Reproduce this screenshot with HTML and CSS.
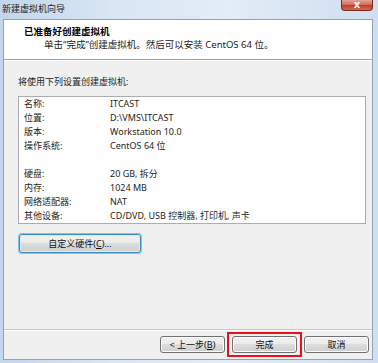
FILE: index.html
```html
<!DOCTYPE html>
<html lang="zh-CN">
<head>
  <meta charset="UTF-8" />
  <title>新建虚拟机向导</title>
  <link rel="stylesheet" href="styles.css">
</head>
<body>
  <div class="window">
    <div class="titlebar">
      <span class="title">新建虚拟机向导</span>
      <div class="close-btn">x</div>
    </div>

    <div class="client">
      <div class="header">
        <div class="header-title">已准备好创建虚拟机</div>
        <div class="header-sub">单击“完成”创建虚拟机。然后可以安装 CentOS 64 位。</div>
      </div>

      <div class="content">
        <p class="intro">将使用下列设置创建虚拟机:</p>
        <div class="listbox">
          <div class="row"><span class="key">名称:</span><span>ITCAST</span></div>
          <div class="row"><span class="key">位置:</span><span>D:\VMS\ITCAST</span></div>
          <div class="row"><span class="key">版本:</span><span>Workstation 10.0</span></div>
          <div class="row"><span class="key">操作系统:</span><span>CentOS 64 位</span></div>
          <div class="row"></div>
          <div class="row"><span class="key">硬盘:</span><span>20 GB, 拆分</span></div>
          <div class="row"><span class="key">内存:</span><span>1024 MB</span></div>
          <div class="row"><span class="key">网络适配器:</span><span>NAT</span></div>
          <div class="row"><span class="key">其他设备:</span><span>CD/DVD, USB 控制器, 打印机, 声卡</span></div>
        </div>
        <button class="btn btn-focus btn-custom">自定义硬件(<u>C</u>)...</button>
      </div>

      <div class="footer">
        <button class="btn">&lt; 上一步(<u>B</u>)</button>
        <div class="highlight">
          <button class="btn">完成</button>
        </div>
        <button class="btn">取消</button>
      </div>
    </div>
  </div>
</body>
</html>
```

FILE: styles.css
```css
body {
  margin: 0;
  padding: 0;
  font-family: "Noto Sans", "Noto Sans CJK SC", sans-serif;
  font-size: 9px;
  color: #1e1e1e;
  background: #fff;
}

.window {
  width: 378px;
  height: 363px;
  display: flex;
  flex-direction: column;
  background: linear-gradient(90deg, #c3d6ec 0%, #d9e6f4 30%, #e3ecf7 60%, #cfdff0 100%);
  box-sizing: border-box;
}

.titlebar {
  height: 19px;
  display: flex;
  justify-content: space-between;
  align-items: flex-start;
  padding: 0 5px 0 2px;
}

.title {
  font-size: 9px;
  line-height: 17px;
  color: #222;
}

.close-btn {
  width: 32px;
  height: 11px;
  line-height: 9px;
  text-align: center;
  color: #fff;
  font-family: "DejaVu Sans", sans-serif;
  font-weight: bold;
  font-size: 10px;
  background: linear-gradient(#e6a396 0%, #d2705f 45%, #c0402a 55%, #cf6a4f 100%);
  border: 1px solid #7a2a20;
  border-top: none;
  border-radius: 0 0 4px 4px;
  box-sizing: border-box;
}

.client {
  flex: 1;
  margin: 0 5px 3px 3px;
  background: #f0f0f0;
  border: 1px solid #8ea4bd;
  display: flex;
  flex-direction: column;
}

.header {
  height: 40px;
  background: #fff;
  border-bottom: 1px solid #a0a0a0;
  box-shadow: 0 1px 0 #fff;
  padding: 5px 0 0 20px;
  box-sizing: border-box;
}

.header-title {
  font-size: 9.5px;
  font-weight: bold;
  line-height: 13px;
  color: #000;
}

.header-sub {
  font-size: 9.5px;
  line-height: 14px;
  padding-left: 20px;
  color: #222;
}

.content {
  flex: 1;
  padding: 15px 6px 0 14px;
}

.intro {
  margin: 0 0 7px 0;
  line-height: 14px;
}

.listbox {
  background: #fff;
  border: 1px solid #abadb3;
  padding: 0 0 0 5px;
}

.row {
  height: 14px;
  line-height: 14px;
  display: flex;
}

.key {
  width: 86px;
}

.btn {
  font-family: "Noto Sans", "Noto Sans CJK SC", sans-serif;
  font-size: 9px;
  color: #111;
  width: 65px;
  height: 17px;
  padding: 0;
  border: 1px solid #707070;
  border-radius: 3px;
  background: linear-gradient(#f2f2f2 0%, #ebebeb 50%, #dddddd 50%, #cfcfcf 100%);
  box-shadow: inset 0 0 0 1px #fbfbfb;
}

.btn u {
  text-decoration: underline;
}

.btn-custom {
  width: 122px;
  height: 19px;
  margin: 10px 0 0 1px;
}

.btn-focus {
  border-color: #3c8dc4;
  box-shadow: 0 0 0 1px #7ec4ea, inset 0 0 0 1px #d7ecf8;
}

.footer {
  height: 29px;
  border-top: 1px solid #c6c6c6;
  box-shadow: inset 0 1px 0 #fff;
  display: flex;
  justify-content: flex-end;
  align-items: center;
  gap: 7px;
  padding: 0 3px 0 0;
}

.highlight {
  border: 2px solid #e4111b;
  padding: 2px 3px;
  margin: 0 -5px;
}
```
